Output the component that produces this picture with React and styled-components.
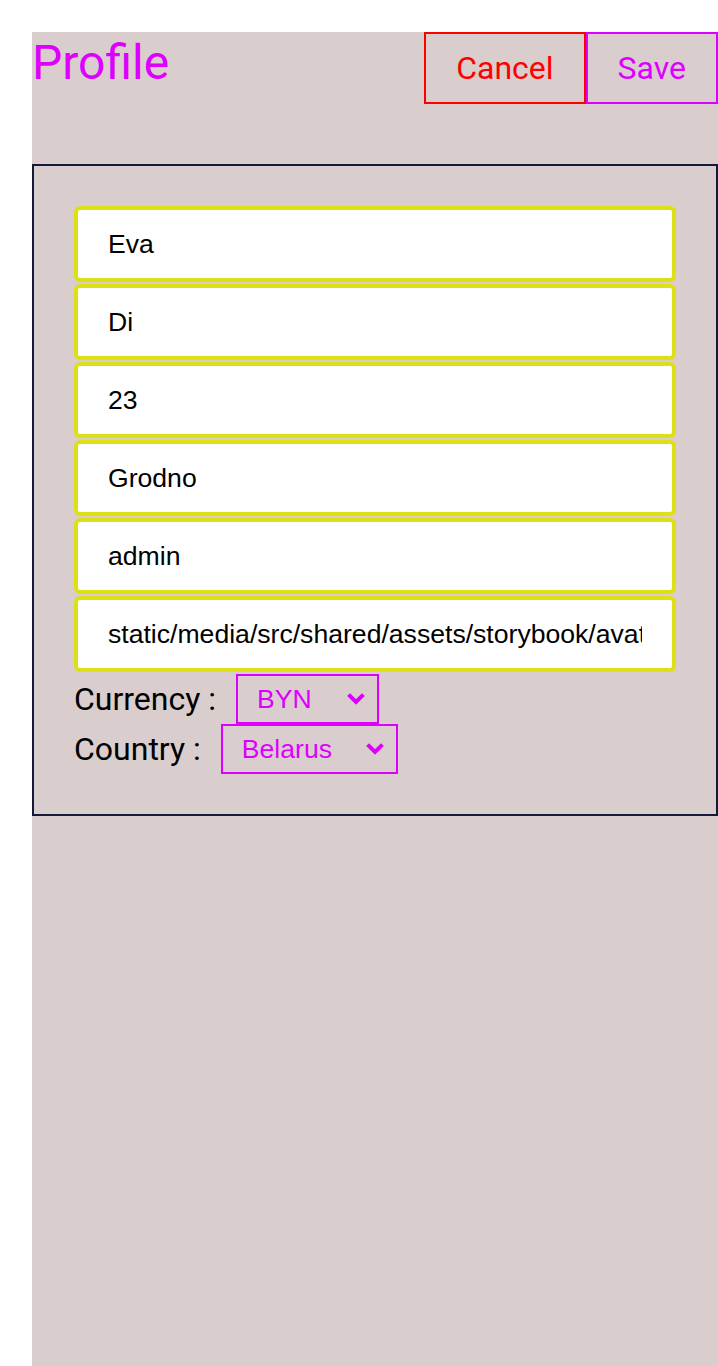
import React, { useState } from 'react'
import styled, { createGlobalStyle } from 'styled-components'

const GlobalStyle = createGlobalStyle`
  body {
    margin: 0;
    background: white;
    font-family: Roboto, "Liberation Sans", sans-serif;
  }
  * {
    box-sizing: border-box;
  }
`

const Page = styled.div`
  padding: 32px 0 0 32px;
  min-height: 100vh;
  display: flex;
`

const Content = styled.main`
  flex: 1;
  background: #dacdcd;
  min-height: calc(100vh - 32px);
`

const Header = styled.header`
  display: flex;
  align-items: flex-start;
  margin-bottom: 60px;
`

const Title = styled.h1`
  margin: 0;
  padding-top: 3px;
  flex: 1;
  font-size: 48px;
  line-height: 56px;
  font-weight: 400;
  color: #dd00ff;
`

const Button = styled.button`
  height: 72px;
  padding: 0 30px;
  background: transparent;
  border: 2px solid ${props => props.color};
  color: ${props => props.color};
  font-family: Roboto, sans-serif;
  font-size: 32px;
  cursor: pointer;
`

const Card = styled.section`
  border: 2px solid #141a3a;
  padding: 40px;
  display: flex;
  flex-direction: column;
  gap: 2px;
`

const Input = styled.input`
  height: 76px;
  width: 100%;
  border: 4px solid #dde014;
  border-radius: 6px;
  background: white;
  padding: 0 30px;
  font-family: "Liberation Sans", Arial, sans-serif;
  font-size: 26.6px;
  color: black;
  outline: none;
`

const Selects = styled.div`
  display: flex;
  flex-direction: column;
`

const SelectRow = styled.label`
  display: flex;
  align-items: center;
  gap: 20px;
  font-size: 32px;
  color: black;
`

const SelectBox = styled.div`
  position: relative;
  width: ${props => props.width}px;
  height: 50px;
`

const Select = styled.select`
  appearance: none;
  width: 100%;
  height: 100%;
  border: 2px solid #dd00ff;
  border-radius: 0;
  background: transparent;
  color: #dd00ff;
  font-family: "Liberation Sans", Arial, sans-serif;
  font-size: 26.6px;
  padding: 0 0 0 19px;
  outline: none;
`

const Chevron = styled.svg`
  position: absolute;
  right: 14px;
  top: 50%;
  transform: translateY(-50%);
  pointer-events: none;
`

const currencies = ['BYN', 'USD', 'EUR', 'RUB']
const countries = ['Belarus', 'Ukraine', 'Russia', 'Kazakhstan']

const fields = [
  'Eva',
  'Di',
  '23',
  'Grodno',
  'admin',
  'static/media/src/shared/assets/storybook/avatar.jpg',
]

function Dropdown({ label, options, value, onChange, width }) {
  return (
    <SelectRow>
      {label + ' :'}
      <SelectBox width={width}>
        <Select value={value} onChange={e => onChange(e.target.value)}>
          {options.map(o => <option key={o} value={o}>{o}</option>)}
        </Select>
        <Chevron width="18" height="12" viewBox="0 0 18 12">
          <path d="M3 3 L9 9 L15 3" fill="none" stroke="#dd00ff" strokeWidth="4" strokeLinecap="square" />
        </Chevron>
      </SelectBox>
    </SelectRow>
  )
}

export default function App() {
  const [values, setValues] = useState(fields)
  const [currency, setCurrency] = useState('BYN')
  const [country, setCountry] = useState('Belarus')

  return (
    <Page>
      <GlobalStyle />
      <Content>
        <Header>
          <Title>Profile</Title>
          <Button color="#ff0000">Cancel</Button>
          <Button color="#dd00ff">Save</Button>
        </Header>
        <Card>
          {values.map((v, i) => (
            <Input
              key={i}
              value={v}
              onChange={e => setValues(values.map((x, j) => (j === i ? e.target.value : x)))}
            />
          ))}
          <Selects>
            <Dropdown label="Currency" options={currencies} value={currency} onChange={setCurrency} width={143} />
            <Dropdown label="Country" options={countries} value={country} onChange={setCountry} width={177} />
          </Selects>
        </Card>
      </Content>
    </Page>
  )
}
